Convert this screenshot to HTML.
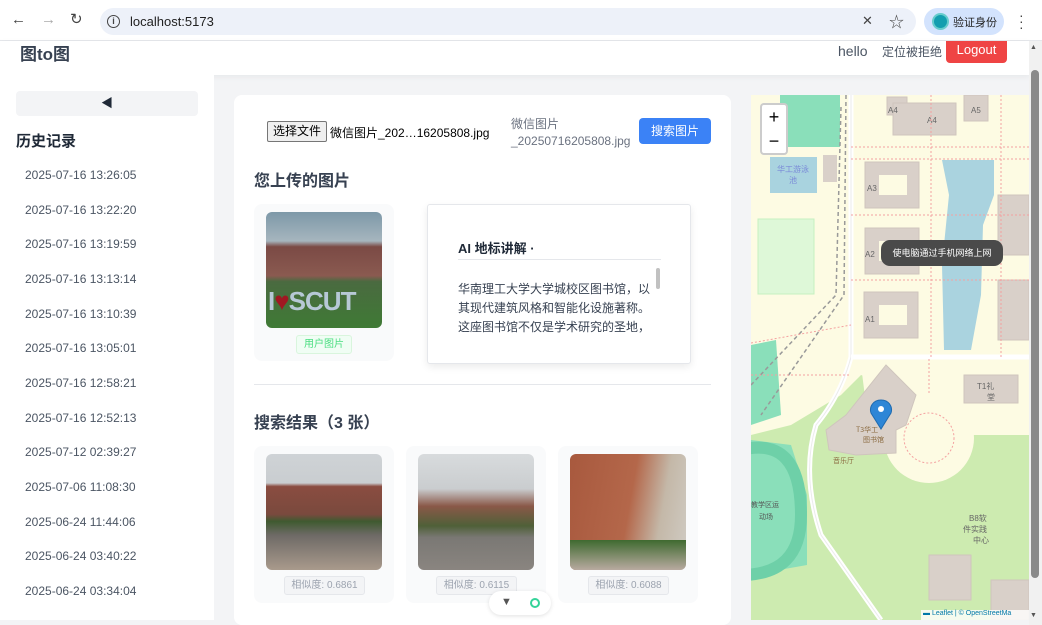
<!DOCTYPE html>
<html><head><meta charset="utf-8"><style>
*{margin:0;padding:0;box-sizing:border-box}
body{width:1042px;height:625px;overflow:hidden;background:#f3f4f6;font-family:"Liberation Sans","Noto Sans CJK SC",sans-serif;position:relative;color:#374151}
.abs{position:absolute}
</style></head><body>
<!-- browser bar -->
<div class="abs" style="left:0;top:0;width:1042px;height:41px;background:#fff;border-bottom:1px solid #e5e7eb"></div>
<div class="abs" style="left:11px;top:11px;font-size:15px;color:#444">&#8592;</div>
<div class="abs" style="left:41px;top:11px;font-size:15px;color:#aaa">&#8594;</div>
<div class="abs" style="left:70px;top:10px;font-size:15px;color:#444">&#8635;</div>
<div class="abs" style="left:100px;top:8px;width:816px;height:27px;border-radius:14px;background:#edf1f9"></div>
<div class="abs" style="left:107px;top:15px;width:13px;height:13px;border:1.5px solid #444;border-radius:50%;font-size:9px;line-height:10px;text-align:center;font-weight:bold;color:#444">i</div>
<div class="abs" style="left:130px;top:14px;font-size:13px;color:#222">localhost:5173</div>
<div class="abs" style="left:862px;top:13px;font-size:13px;color:#444">&#10005;</div>
<div class="abs" style="left:889px;top:11px;font-size:15px;color:#444">&#9734;</div>
<div class="abs" style="left:924px;top:8px;width:80px;height:27px;border-radius:14px;background:#d3e3fd"></div>
<div class="abs" style="left:932px;top:13px;width:17px;height:17px;border-radius:50%;background:#129eaf;border:2px solid #6cc"></div>
<div class="abs" style="left:953px;top:14px;font-size:11px;color:#222">验证身份</div>
<div class="abs" style="left:1019px;top:12px;font-size:14px;color:#444;line-height:6px">·<br>·<br>·</div>
<!-- header -->
<div class="abs" style="left:0;top:41px;width:1030px;height:34px;background:#fff;box-shadow:0 2px 6px rgba(0,0,0,.05)"></div>
<div class="abs" style="left:20px;top:40px;font-size:17px;font-weight:bold;color:#374151">图to图</div>
<div class="abs" style="left:838px;top:43px;font-size:14px;color:#4b5563">hello</div>
<div class="abs" style="left:882px;top:43px;font-size:12px;color:#4b5563">定位被拒绝</div>
<div class="abs" style="left:946px;top:41px;width:61px;height:22px;background:#ef4444;border-radius:0 0 4px 4px;color:#fff;font-size:13px;text-align:center;line-height:18px">Logout</div>
<!-- sidebar -->
<div class="abs" style="left:0;top:75px;width:214px;height:545px;background:#fff"></div>
<div class="abs" style="left:16px;top:91px;width:182px;height:25px;background:#f3f4f6;border-radius:4px;text-align:center;font-size:12px;line-height:25px;color:#1f2937">&#9664;</div>
<div class="abs" style="left:16px;top:130px;font-size:15px;font-weight:bold;color:#1f2937">历史记录</div>
<div class="abs" style="left:25px;top:158px;font-size:12px;color:#4b5563;line-height:34.67px">2025-07-16 13:26:05<br>2025-07-16 13:22:20<br>2025-07-16 13:19:59<br>2025-07-16 13:13:14<br>2025-07-16 13:10:39<br>2025-07-16 13:05:01<br>2025-07-16 12:58:21<br>2025-07-16 12:52:13<br>2025-07-12 02:39:27<br>2025-07-06 11:08:30<br>2025-06-24 11:44:06<br>2025-06-24 03:40:22<br>2025-06-24 03:34:04</div>
<!-- main card -->
<div class="abs" style="left:234px;top:95px;width:497px;height:530px;background:#fff;border-radius:8px"></div>
<div class="abs" style="left:267px;top:121px;width:60px;height:21px;border:1px solid #767676;border-radius:2px;background:#efefef;font-size:12px;text-align:center;line-height:19px;color:#000">选择文件</div>
<div class="abs" style="left:330px;top:124px;font-size:12px;color:#000">微信图片_202…16205808.jpg</div>
<div class="abs" style="left:511px;top:116px;font-size:12px;color:#6b7280;line-height:17px">微信图片<br>_20250716205808.jpg</div>
<div class="abs" style="left:639px;top:118px;width:72px;height:26px;background:#3b82f6;border-radius:4px;color:#fff;font-size:12px;text-align:center;line-height:26px">搜索图片</div>
<div class="abs" style="left:254px;top:167px;font-size:16px;font-weight:bold;color:#374151">您上传的图片</div>
<div class="abs" style="left:254px;top:204px;width:140px;height:157px;background:#f9fafb;border-radius:8px"></div>
<div class="abs" style="left:266px;top:212px;width:116px;height:116px;border-radius:6px;background:linear-gradient(#7d98a8 0%,#a6b5be 25%,#7b4a45 30%,#8a5a50 55%,#4a6a40 60%,#3f7a35 100%)"></div>
<div class="abs" style="left:268px;top:286px;font-size:26px;font-weight:bold;color:#b7c8d6;letter-spacing:-1px">I<span style="color:#a01822">♥</span>SCUT</div>
<div class="abs" style="left:296px;top:335px;width:56px;height:19px;background:#f0fdf4;border:1px solid #d9f5dd;border-radius:3px;font-size:10px;color:#4ade80;text-align:center;line-height:17px">用户图片</div>
<div class="abs" style="left:427px;top:204px;width:264px;height:160px;background:#fff;border:1px solid #e5e7eb;border-radius:3px;box-shadow:0 3px 8px rgba(0,0,0,.08)"></div>
<div class="abs" style="left:458px;top:238px;font-size:13px;font-weight:bold;color:#1f2937">AI 地标讲解 ·</div>
<div class="abs" style="left:458px;top:259px;width:203px;height:1px;background:#e5e7eb"></div>
<div class="abs" style="left:656px;top:268px;width:4px;height:21px;background:#c1c1c1;border-radius:2px"></div>
<div class="abs" style="left:458px;top:280px;font-size:12px;color:#374151;line-height:19px">华南理工大学大学城校区图书馆，以<br>其现代建筑风格和智能化设施著称。<br>这座图书馆不仅是学术研究的圣地，</div>
<div class="abs" style="left:254px;top:384px;width:457px;height:1px;background:#e5e7eb"></div>
<div class="abs" style="left:254px;top:409px;font-size:16px;font-weight:bold;color:#374151">搜索结果（3 张）</div>
<div class="abs" style="left:254px;top:446px;width:140px;height:157px;background:#f9fafb;border-radius:8px"></div>
<div class="abs" style="left:406px;top:446px;width:140px;height:157px;background:#f9fafb;border-radius:8px"></div>
<div class="abs" style="left:558px;top:446px;width:140px;height:157px;background:#f9fafb;border-radius:8px"></div>
<div class="abs" style="left:266px;top:454px;width:116px;height:116px;border-radius:6px;background:linear-gradient(#cfd3d6 0%,#c9cdd0 25%,#8a4c40 28%,#7a4a3e 52%,#3f5a30 58%,#6e6a66 70%,#a99a8c 100%)"></div>
<div class="abs" style="left:418px;top:454px;width:116px;height:116px;border-radius:6px;background:linear-gradient(#d8dbdd 0%,#cacdcf 30%,#8a5848 45%,#4f6038 62%,#7a7874 72%,#8a8580 100%)"></div>
<div class="abs" style="left:570px;top:454px;width:116px;height:116px;border-radius:6px;background:linear-gradient(100deg,#a8593e 0%,#b4674a 50%,#c4b8a8 75%,#d0ccc4 100%)"></div>
<div class="abs" style="left:570px;top:540px;width:116px;height:30px;border-radius:0 0 6px 6px;background:linear-gradient(#3f6a30,#b8aaa0)"></div>
<div class="abs" style="left:284px;top:576px;width:81px;height:19px;background:#f3f4f6;border:1px solid #e5e7eb;border-radius:3px;font-size:10px;color:#9ca3af;text-align:center;line-height:17px">相似度: 0.6861</div>
<div class="abs" style="left:436px;top:576px;width:81px;height:19px;background:#f3f4f6;border:1px solid #e5e7eb;border-radius:3px;font-size:10px;color:#9ca3af;text-align:center;line-height:17px">相似度: 0.6115</div>
<div class="abs" style="left:588px;top:576px;width:81px;height:19px;background:#f3f4f6;border:1px solid #e5e7eb;border-radius:3px;font-size:10px;color:#9ca3af;text-align:center;line-height:17px">相似度: 0.6088</div>
<div class="abs" style="left:489px;top:591px;width:62px;height:24px;background:#fff;border-radius:12px;box-shadow:0 1px 4px rgba(0,0,0,.12)"></div>
<div class="abs" style="left:501px;top:596px;font-size:11px;color:#555">&#9660;</div>
<div class="abs" style="left:530px;top:598px;width:10px;height:10px;border:2px solid #34d399;border-radius:50%"></div>
<!-- map -->
<div class="abs" style="left:751px;top:95px;width:278px;height:525px;background:#fdfbe3;overflow:hidden">
<svg width="278" height="525" style="position:absolute;left:0;top:0">
<rect x="29" y="0" width="60" height="52" fill="#8adfba"/>
<rect x="19" y="62" width="47" height="36" fill="#a9d3df"/>
<text x="42" y="77" font-size="8" fill="#7a8ad8" text-anchor="middle" font-family="Noto Sans CJK SC">华工游泳</text>
<text x="42" y="88" font-size="8" fill="#7a8ad8" text-anchor="middle" font-family="Noto Sans CJK SC">池</text>
<rect x="72" y="60" width="14" height="27" fill="#d9d0c9"/>
<rect x="7" y="124" width="56" height="75" fill="#def8d8" stroke="#c5f0c0"/>
<path d="M0 340 L40 330 L90 300 L110 280 L170 300 L200 340 L278 340 L278 525 L0 525Z" fill="#cdebb0"/>
<path d="M110 270 L180 262 L200 330 L160 360 L120 350Z" fill="#fdfbe3"/>
<circle cx="178" cy="343" r="45" fill="#fdfbe3"/>
<path d="M0 250 L25 245 L30 320 L0 330Z" fill="#8adfba"/>
<path d="M0 345 L40 350 L56 400 L56 470 L0 480Z" fill="#8adfba"/>
<path d="M-10 355 Q50 340 50 420 Q50 480 -10 480" fill="none" stroke="#6ed0a8" stroke-width="12"/>
<path d="M100 0 L100 262 Q90 300 65 330 Q50 380 70 440 L130 525" fill="none" stroke="#fff" stroke-width="5"/>
<path d="M100 0 L100 262 Q90 300 65 330 Q50 380 70 440 L130 525" fill="none" stroke="#ddd" stroke-width="1" opacity=".6"/>
<path d="M100 262 L278 262" stroke="#fff" stroke-width="5"/>
<path d="M90 12 L85 200 L0 290" fill="none" stroke="#999" stroke-width="1.5" stroke-dasharray="4 3"/>
<path d="M95 0 L93 200 L10 320" fill="none" stroke="#999" stroke-width="1.5" stroke-dasharray="4 3"/>
<g fill="#d9d0c9" stroke="#cfc5bd">
<rect x="136" y="2" width="20" height="18"/>
<rect x="142" y="8" width="63" height="32"/>
<rect x="213" y="0" width="24" height="26"/>
<rect x="114" y="67" width="54" height="46"/><rect x="114" y="133" width="54" height="46"/><rect x="113" y="197" width="54" height="46"/>
<rect x="247" y="100" width="31" height="60"/><rect x="247" y="185" width="31" height="60"/>
<path d="M95 320 L135 270 L165 300 L155 330 L145 335 L145 358 L105 360 L78 355 L75 335Z"/>
<rect x="213" y="280" width="54" height="28"/>
<rect x="178" y="460" width="42" height="45"/><rect x="240" y="485" width="38" height="40"/>
</g>
<g fill="#fdfbe3"><rect x="128" y="80" width="28" height="20"/><rect x="128" y="146" width="28" height="20"/><rect x="128" y="210" width="28" height="20"/></g>
<path d="M191 65 L243 65 L243 100 L232 130 L230 200 L220 255 L193 255 L191 170 L198 100Z" fill="#aad3df"/>
<g font-size="8" fill="#666" font-family="Liberation Sans"><text x="137" y="18">A4</text><text x="176" y="28">A4</text><text x="220" y="18">A5</text><text x="116" y="96">A3</text><text x="114" y="162">A2</text><text x="114" y="227">A1</text><text x="226" y="294">T1礼</text><text x="236" y="305">堂</text><text x="218" y="426">B8软</text><text x="212" y="437">件实践</text><text x="222" y="448">中心</text></g>
<g font-size="7" fill="#8a6a40" font-family="Noto Sans CJK SC"><text x="105" y="337">T3华工</text><text x="112" y="347">图书馆</text><text x="82" y="368">音乐厅</text></g>
<text x="0" y="412" font-size="7" fill="#555" font-family="Noto Sans CJK SC">教学区运</text>
<text x="8" y="424" font-size="7" fill="#555" font-family="Noto Sans CJK SC">动场</text>
<g stroke="#f4a0a0" stroke-width="1" stroke-dasharray="2 2" fill="none"><path d="M100 52 H278 M100 64 H278 M100 120 H278 M100 185 H278 M180 0 V262 M250 0 V262 M0 248 L100 230 M178 298 V262 M0 280 L100 280"/><circle cx="178" cy="343" r="25"/></g>
<path d="M130 305 c-8 0 -12 7 -10 13 l10 16 l10 -16 c2 -6 -2 -13 -10 -13z" fill="#2e86d6" stroke="#1f6bb0"/>
<circle cx="130" cy="314" r="3" fill="#fff"/>
</svg>
<div class="abs" style="left:9px;top:8px;width:28px;height:52px;background:#fff;border:2px solid rgba(0,0,0,.2);border-radius:4px;font-size:18px;text-align:center;line-height:24px;color:#000">+<br>−</div>
<div class="abs" style="left:130px;top:145px;width:122px;height:26px;background:#4a4a4a;border-radius:9px;color:#fff;font-size:9px;text-align:center;line-height:26px">使电脑通过手机网络上网</div>
<div class="abs" style="left:170px;top:515px;width:108px;height:10px;background:rgba(255,255,255,.8);font-size:7px;color:#0078a8;padding-left:2px">▬ Leaflet | © OpenStreetMa</div>
</div>
<!-- scrollbar -->
<div class="abs" style="left:1029px;top:41px;width:13px;height:584px;background:#f1f1f1"></div>
<div class="abs" style="left:1031px;top:70px;width:8px;height:508px;background:#8a8a8a;border-radius:4px"></div>
<div class="abs" style="left:1030px;top:44px;font-size:7px;color:#555">▲</div>
<div class="abs" style="left:1030px;top:612px;font-size:7px;color:#555">▼</div>
</body></html>
